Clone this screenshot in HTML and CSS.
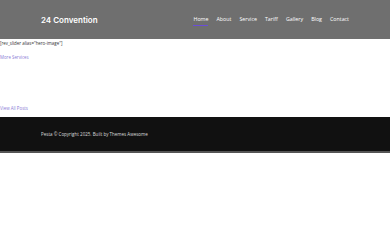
FILE: index.html
```html
<!DOCTYPE html>
<html lang="en">
<head>
  <meta charset="UTF-8">
  <meta name="viewport" content="width=device-width, initial-scale=1.0">
  <title>24 Convention</title>
  <link rel="stylesheet" href="styles.css">
</head>
<body>
  <header class="site-header">
    <div class="container header-inner">
      <a class="brand" href="#">24 Convention</a>
      <nav class="menu">
        <a href="#" class="active">Home</a>
        <a href="#">About</a>
        <a href="#">Service</a>
        <a href="#">Tariff</a>
        <a href="#">Gallery</a>
        <a href="#">Blog</a>
        <a href="#">Contact</a>
      </nav>
    </div>
  </header>

  <main class="content">
    <p class="shortcode">[rev_slider alias="hero-image"]</p>
    <a class="more-link services" href="#">More Services</a>
    <a class="more-link posts" href="#">View All Posts</a>
  </main>

  <footer class="site-footer">
    <div class="container">
      <p>Pesta © Copyright 2025. Built by Themes Awesome</p>
    </div>
  </footer>
</body>
</html>
```

FILE: styles.css
```css
* {
  box-sizing: border-box;
}

body {
  margin: 0;
  font-family: "Open Sans", Arial, sans-serif;
  background: #fff;
  color: #333;
}

.container {
  padding: 0 41px;
}

.site-header {
  background-color: #6f6f6f;
  height: 39px;
}

.header-inner {
  display: flex;
  justify-content: space-between;
  align-items: center;
  height: 100%;
}

.brand {
  color: #fff;
  text-decoration: none;
  font-family: Inter, Arial, sans-serif;
  font-weight: 600;
  font-size: 8px;
}

.menu {
  display: flex;
  gap: 8px;
  padding-top: 1px;
}

.menu a {
  color: #fff;
  text-decoration: none;
  font-size: 5.3px;
  padding-bottom: 2px;
  border-bottom: 1px solid transparent;
}

.menu a.active {
  border-bottom-color: #6a4dd8;
}

.content {
  height: 78px;
  padding-top: 1px;
  font-size: 4.4px;
}

.shortcode {
  margin: 0;
  color: #333;
}

.more-link {
  display: block;
  color: #8a7ad6;
  text-decoration: none;
}

.services {
  margin-top: 8px;
}

.posts {
  margin-top: 45px;
}

.site-footer {
  background: #111;
  height: 36px;
  border-bottom: 2px solid #555;
  display: flex;
  align-items: center;
}

.site-footer p {
  margin: 0;
  color: #ddd;
  font-size: 4.5px;
}
```
